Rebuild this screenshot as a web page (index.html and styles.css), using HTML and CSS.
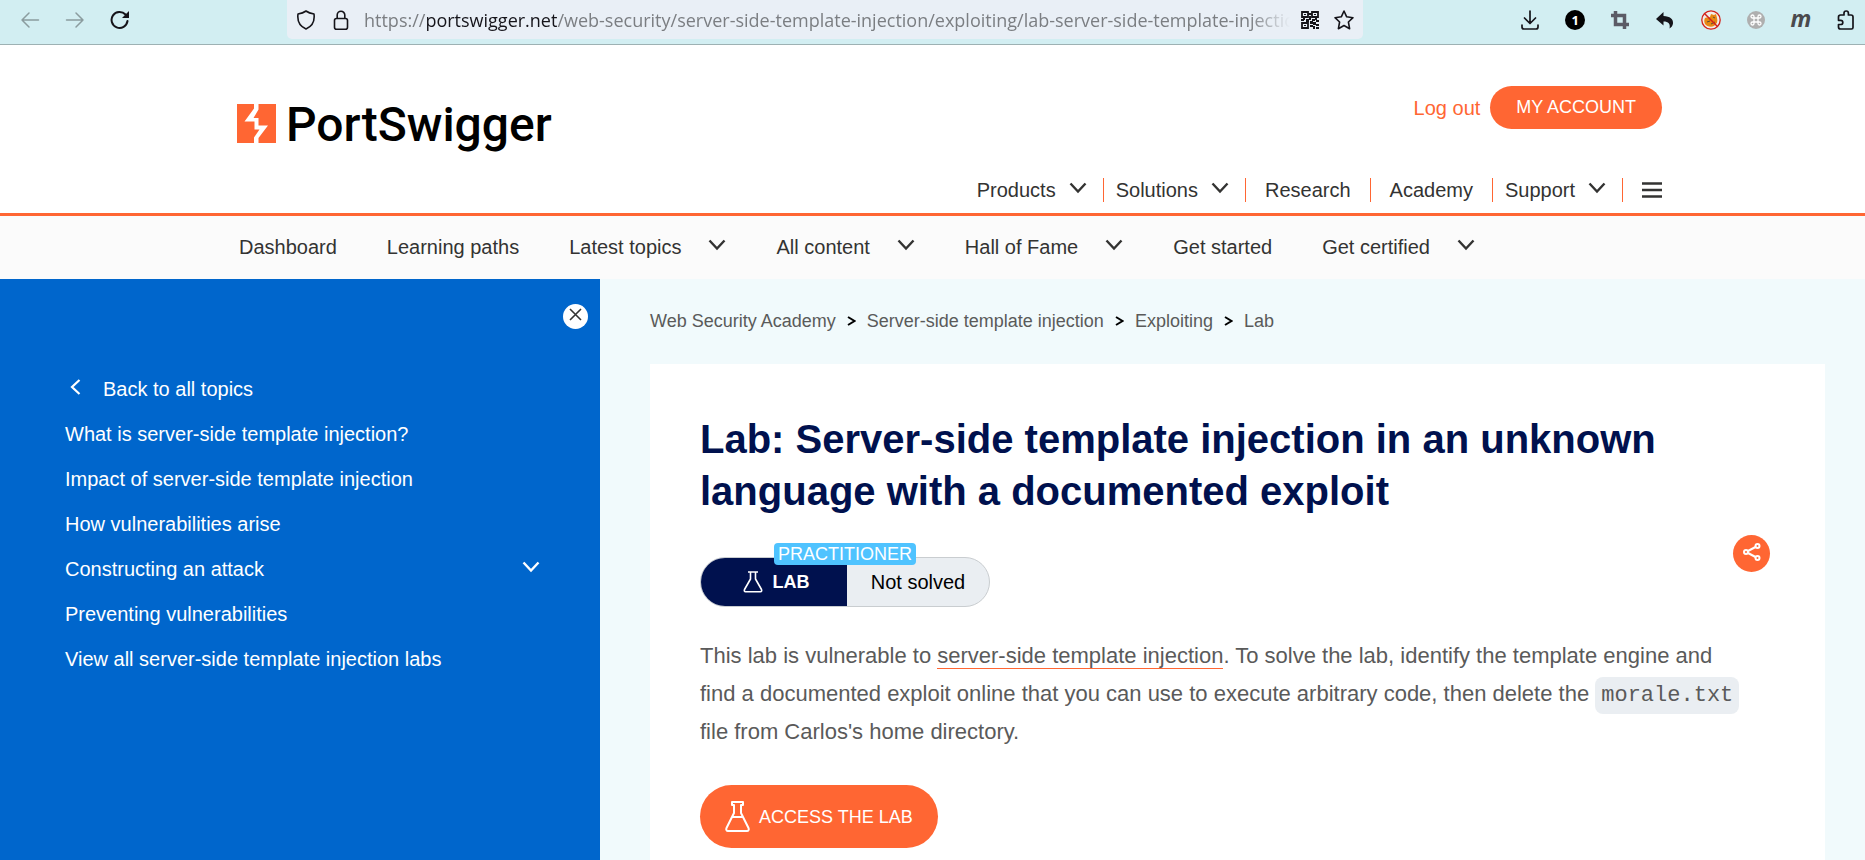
FILE: index.html
```html
<!DOCTYPE html>
<html lang="en">
<head>
<meta charset="utf-8">
<title>Lab: Server-side template injection in an unknown language with a documented exploit</title>
<link rel="stylesheet" href="styles.css">
</head>
<body>
<svg class="defs" aria-hidden="true">
  <symbol id="chevron" viewBox="0 0 18 12"><path d="M1.500 1.500 9 9.500l7.500-8" fill="none" stroke="currentColor" stroke-width="2.400"/></symbol>
  <symbol id="crumb" viewBox="0 0 9 10"><path d="m1 1 6.500 4L1 9" fill="none" stroke="currentColor" stroke-width="2"/></symbol>
</svg>
<div class="toolbar">
  <div class="tool-nav">
    <button class="tool faded" aria-label="Back"><svg width="20" height="20" viewBox="0 0 20 20" fill="none" stroke="currentColor" stroke-width="1.500" stroke-linecap="round" stroke-linejoin="round"><path d="M18.500 10H2M9 3l-7 7 7 7"/></svg></button>
    <button class="tool faded" aria-label="Forward"><svg width="20" height="20" viewBox="0 0 20 20" fill="none" stroke="currentColor" stroke-width="1.500" stroke-linecap="round" stroke-linejoin="round"><path d="M1.500 10H18M11 3l7 7-7 7"/></svg></button>
    <button class="tool" aria-label="Reload"><svg width="20" height="20" viewBox="0 0 20 20"><path d="M17.500 11A8 8 0 1 1 15.500 4.500" fill="none" stroke="currentColor" stroke-width="2" stroke-linecap="round"/><path d="M19 1v7h-7z" fill="currentColor"/></svg></button>
  </div>
  <div class="address">
    <svg width="20" height="20" viewBox="0 0 20 20" fill="none" stroke="currentColor" stroke-width="1.600" stroke-linejoin="round"><path d="M10 1c2.500 1.800 5 2.500 8 3 .8 6-1.500 12-8 15C3.500 16 1.200 10 2 4c3-.5 5.500-1.200 8-3z"/></svg>
    <svg width="20" height="20" viewBox="0 0 20 20" fill="none" stroke="currentColor" stroke-width="1.600"><rect x="3.500" y="8.500" width="13" height="10.700" rx="2"/><path d="M6.200 8.500V5a3.800 3.800 0 0 1 7.600 0v3.500"/></svg>
    <div class="url">https://<b>portswigger.net</b>/web-security/server-side-template-injection/exploiting/lab-server-side-template-injectic</div>
    <svg width="18" height="18" viewBox="0 0 18 18"><g fill="none" stroke="currentColor" stroke-width="1.800"><path d="M1 1h6v5H1zM11 1h6v5h-6zM1 12h6v5H1z"/></g><path d="M3 3h2v1H3zM13 3h2v1h-2zM3 14h2v1H3zM7 2h4v2H7zM8 5h2v4H8zM2 6h2v3H2zM0 8h3v2H0zM5 8h3v3H5zM11 8h3v2h-3zM14 6h2v3h-2zM15 9h3v2h-3zM9 10h3v3H9zM12 11h3v3h-3zM15 13h3v2h-3zM9 14h3v2H9zM12 15h2v3h-2zM15 16h3v2h-3z" fill="currentColor"/></svg>
    <svg width="20" height="20" viewBox="0 0 20 20" fill="none" stroke="currentColor" stroke-width="1.600" stroke-linejoin="round"><path d="m10 1 2.700 5.800 6.300.9-4.600 4.300 1.200 6.700L10 15.500l-5.600 3.200L5.600 12 1 7.700l6.300-.9z"/></svg>
  </div>
  <div class="extensions">
    <button class="tool" aria-label="Downloads"><svg width="20" height="20" viewBox="0 0 20 20" fill="none" stroke="currentColor" stroke-width="1.700" stroke-linecap="round" stroke-linejoin="round"><path d="M10 1v12M4.500 8l5.500 5.500L15.500 8M2 15v2a2 2 0 0 0 2 2h12a2 2 0 0 0 2-2v-2"/></svg></button>
    <button class="tool badge" aria-label="1 notification">1</button>
    <button class="tool gray" aria-label="Screenshot"><svg width="18" height="18" viewBox="0 0 18 18" fill="none" stroke="currentColor" stroke-width="3.500"><path d="M4.500 0v13.500H18M0 4.500h13.500V18"/></svg></button>
    <button class="tool" aria-label="Undo"><svg width="20" height="20" viewBox="0 0 20 20"><path d="M8.500 2v4c6.500.3 10 3 9.500 7.500-.3 2.300-1.500 4-3.500 5C15.500 14 13.500 11.500 8.500 11.500v4L1 9z" fill="currentColor"/></svg></button>
    <button class="tool" aria-label="Blocked"><svg width="20" height="20" viewBox="0 0 20 20"><circle cx="10" cy="10" r="9.200" fill="#f3ece8"/><path d="M4 8c2-1 3 0 5-1l1-3 3 1 2-1 1 4c1 3 0 6-3 8-3 1.500-7 .5-9-2-1-2-1-4 0-6z" fill="#e88712"/><path d="m6 12 3-1M10 14l4-2M12 7l2 1" stroke="#5b4b3a"/><circle cx="10" cy="10" r="9.200" fill="none" stroke="#d3221a" stroke-width="1.300"/><path d="m3.500 3.500 13 13" stroke="#d3221a" stroke-width="1.500"/></svg></button>
    <button class="tool" aria-label="Shortcuts"><svg width="18" height="18" viewBox="0 0 18 18"><circle cx="9" cy="9" r="9" fill="#afafaf"/><path d="M7 7h4v4H7zM7 7H5.500A1.500 1.500 0 1 1 7 5.500zM11 7V5.500A1.500 1.500 0 1 1 12.500 7zM11 11h1.500a1.500 1.500 0 1 1-1.500 1.500zM7 11v1.500A1.500 1.500 0 1 1 5.500 11z" fill="none" stroke="#fff" stroke-width="1.300"/></svg></button>
    <button class="tool mark" aria-label="Markdown">m</button>
    <button class="tool" aria-label="Extensions"><svg width="20" height="20" viewBox="0 0 20 20" fill="none" stroke="currentColor" stroke-width="1.700" stroke-linejoin="round"><path d="M2.500 9V7a2 2 0 0 1 2-2H8V3.200a2.200 2.200 0 0 1 4.400 0V5H15a2 2 0 0 1 2 2v10.500a1.500 1.500 0 0 1-1.500 1.500h-11a2 2 0 0 1-2-2v-2.500h2.200a2.100 2.100 0 0 0 0-4.200H2.500z"/></svg></button>
  </div>
</div>

<header class="site-header">
  <div class="wrap header-grid">
    <a class="logo" href="#" aria-label="PortSwigger">
      <svg width="39" height="39" viewBox="0 0 39 39"><path d="M0 0h39v39H0z" fill="#ff6633"/><path d="M17 0h4.500v5.500L16.500 14H21.500v7.500H31L21.500 34v5H17v-5.500L22.500 25.500H17.500V17.500H7.500L17 4.500z" fill="#fff"/></svg>
      <span>PortSwigger</span>
    </a>
    <div class="account"><a class="logout" href="#">Log out</a><a class="pill" href="#">MY ACCOUNT</a></div>
    <nav class="main-nav">
      <button>Products <svg class="down" width="18" height="12"><use href="#chevron"/></svg></button>
      <button>Solutions <svg class="down" width="18" height="12"><use href="#chevron"/></svg></button>
      <a class="plain" href="#">Research</a>
      <a class="plain" href="#">Academy</a>
      <button>Support <svg class="down" width="18" height="12"><use href="#chevron"/></svg></button>
      <button class="burger" aria-label="Menu"><svg width="20" height="16" viewBox="0 0 20 16"><path d="M0 1.500h20M0 8h20M0 14.500h20" stroke="currentColor" stroke-width="2.500"/></svg></button>
    </nav>
  </div>
</header>

<nav class="sub-nav">
  <div class="wrap sub-row">
    <a href="#">Dashboard</a>
    <a href="#">Learning paths</a>
    <button>Latest topics <svg class="down" width="18" height="12"><use href="#chevron"/></svg></button>
    <button>All content <svg class="down" width="18" height="12"><use href="#chevron"/></svg></button>
    <button>Hall of Fame <svg class="down" width="18" height="12"><use href="#chevron"/></svg></button>
    <a href="#">Get started</a>
    <button>Get certified <svg class="down" width="18" height="12"><use href="#chevron"/></svg></button>
  </div>
</nav>

<div class="page">
  <aside class="sidebar">
    <button class="close" aria-label="Close"><svg width="13" height="13" viewBox="0 0 13 13"><path d="m1 1 11 11M12 1 1 12" stroke="currentColor" stroke-width="1.600"/></svg></button>
    <ul class="topics">
      <li><a class="back" href="#"><svg class="down" width="11" height="16" viewBox="0 0 11 16"><path d="M9.500 1 2 8l7.500 7" fill="none" stroke="currentColor" stroke-width="2.200"/></svg>Back to all topics</a></li>
      <li><a href="#">What is server-side template injection?</a></li>
      <li><a href="#">Impact of server-side template injection</a></li>
      <li><a href="#">How vulnerabilities arise</a></li>
      <li><button>Constructing an attack <svg class="down" width="18" height="12"><use href="#chevron"/></svg></button></li>
      <li><a href="#">Preventing vulnerabilities</a></li>
      <li><a href="#">View all server-side template injection labs</a></li>
    </ul>
  </aside>
  <main class="content">
    <nav class="crumbs" aria-label="Breadcrumb">
      <a href="#">Web Security Academy</a><svg width="9" height="10"><use href="#crumb"/></svg>
      <a href="#">Server-side template injection</a><svg width="9" height="10"><use href="#crumb"/></svg>
      <a href="#">Exploiting</a><svg width="9" height="10"><use href="#crumb"/></svg>
      <a href="#">Lab</a>
    </nav>
    <article class="card">
      <h1>Lab: Server-side template injection in an unknown language with a documented exploit</h1>
      <div class="status-row">
        <div class="status">
          <span class="kind"><svg width="20" height="22" viewBox="0 0 20 22" fill="none" stroke="currentColor" stroke-width="1.600" stroke-linejoin="round"><path d="M5 1h10M7.500 1v7L1.500 18.500c-.5 1.500 0 2.300 1 2.300h15c1 0 1.500-.8 1-2.300L12.500 8V1"/></svg>LAB</span>
          <span class="state">Not solved</span>
          <span class="level">PRACTITIONER</span>
        </div>
        <button class="share" aria-label="Share"><svg width="18" height="18" viewBox="0 0 18 18" fill="none" stroke="currentColor" stroke-width="2"><circle cx="3" cy="9" r="2"/><circle cx="14.500" cy="3" r="2"/><circle cx="14.500" cy="15" r="2"/><path d="m5 8 7.500-4M5 10l7.500 4"/></svg></button>
      </div>
      <p>This lab is vulnerable to <a href="#">server-side template injection</a>. To solve the lab, identify the template engine and find a documented exploit online that you can use to execute arbitrary code, then delete the <code>morale.txt</code> file from Carlos's home directory.</p>
      <a class="access" href="#"><svg width="25" height="31" viewBox="0 0 25 31" fill="none" stroke="currentColor" stroke-width="2" stroke-linejoin="round"><path d="M7 1h11v3h-2v8l7.500 15c.6 1.500 0 3-1.500 3H3c-1.500 0-2.100-1.500-1.500-3L9 12V4H7zM7 16h11"/></svg>ACCESS THE LAB</a>
    </article>
  </main>
</div>
</body>
</html>
```
FILE: styles.css
```css
* { box-sizing: border-box; }
body {
  margin: 0;
  min-height: 100vh;
  display: flex;
  flex-direction: column;
  font: 20px/24px "Liberation Sans", Arial, sans-serif;
  color: #333332;
  background: #fff;
}
a { color: inherit; text-decoration: none; }
button { font: inherit; color: inherit; background: none; border: 0; padding: 0; cursor: pointer; }
svg { display: block; flex: none; }
.defs { position: absolute; width: 0; height: 0; }
.down { margin-bottom: 4px; }

/* browser toolbar */
.toolbar {
  display: grid;
  grid-template-columns: 287px minmax(0, 1fr) 502px;
  height: 45px;
  background: #d2eef2;
  border-bottom: 1px solid #9db1b3;
  color: #15141a;
}
.tool-nav { display: flex; gap: 25px; padding: 0 0 5px 20px; }
.tool { display: flex; align-items: center; justify-content: center; width: 20px; }
.faded { color: #8b9c9f; }
.address {
  display: flex;
  align-items: center;
  gap: 15px;
  height: 39px;
  padding: 0 9px;
  background: #e9eff6;
  border-radius: 0 0 5px 5px;
}
.url {
  flex: 1;
  min-width: 0;
  margin: 0 -4px 0 -2px;
  overflow: hidden;
  white-space: nowrap;
  font: 18px/26px "Open Sans", sans-serif;
  color: #7b7e82;
  mask-image: linear-gradient(to left, transparent, #000 40px);
}
.url b { font-weight: 400; color: #15141a; }
.extensions { display: flex; justify-content: space-between; padding: 0 9px 5px 157px; }
.badge {
  align-self: center;
  height: 20px;
  border-radius: 50%;
  background: #000;
  color: #fff;
  font: 700 13px/20px "Noto Sans", sans-serif;
}
.gray { color: #5b5b66; }
.mark { padding-bottom: 4px; font: italic 700 23px/24px "Open Sans", sans-serif; color: #4a4a4d; }

/* site header */
.wrap { width: 100%; max-width: 1425px; margin: 0 auto; }
.site-header { background: #fff; border-bottom: 3px solid #ff6633; }
.header-grid {
  max-width: 1459px;
  display: grid;
  grid-template-columns: auto 1fr;
  grid-template-rows: 92px 35px;
  padding-top: 41px;
}
.logo {
  grid-row: 1 / 3;
  display: flex;
  align-items: flex-start;
  gap: 10px;
  margin-left: 34px;
  padding-top: 18px;
  color: #000;
}
.logo span { font: 500 48px/42px Roboto, sans-serif; }
.account { display: flex; align-items: flex-start; justify-content: flex-end; gap: 10px; }
.logout { line-height: 44px; color: #ff6633; }
.pill {
  padding: 0 26px;
  border-radius: 22px;
  background: #ff6633;
  color: #fff;
  font-size: 18px;
  line-height: 43px;
}
.main-nav { display: flex; justify-content: flex-end; align-items: flex-start; }
.main-nav > * { display: flex; align-items: center; gap: 13px; padding: 0 16px 0 12px; height: 24px; }
.main-nav > * + * { border-left: 1px solid #ff6633; }
.main-nav .plain { padding: 0 19px; }
.main-nav .burger { padding: 0 0 0 19px; }

/* academy navigation */
.sub-nav { background: #fbfbfb; }
.sub-row { display: flex; gap: 50px; padding: 19px 19px 20px; }
.sub-row button { display: flex; align-items: center; gap: 27px; }

.page { flex: 1; display: grid; grid-template-columns: 600px minmax(0, 1fr); }
.sidebar { display: flex; flex-direction: column; padding: 25px 12px; background: #0066cc; color: #fff; }
.close {
  align-self: flex-end;
  display: flex;
  justify-content: center;
  width: 25px;
  height: 25px;
  padding-top: 4px;
  border-radius: 50%;
  background: #fff;
  color: #333332;
}
.topics { list-style: none; margin: 0; padding: 38px 48px 0 53px; }
.topics li { height: 45px; padding-top: 10px; }
.topics button { display: flex; align-items: center; justify-content: space-between; width: 100%; }
.back { display: flex; align-items: center; gap: 22px; padding-left: 5px; }

.content { padding: 30px 40px 0 50px; background: #f1fafc; display: flex; flex-direction: column; }
.crumbs { display: flex; align-items: center; gap: 11px; font-size: 18px; color: #5a5a5a; }
.crumbs svg { color: #000; }
.card { flex: 1; margin-top: 31px; padding: 49px 50px 12px; background: #fff; }
h1 { margin: 0; font-size: 40px; line-height: 52px; color: #00114e; }
.status-row { display: flex; justify-content: space-between; margin-top: 18px; }
.status {
  position: relative;
  display: flex;
  margin-top: 22px;
  width: 290px;
  height: 50px;
  border: 1px solid #c9cdd0;
  border-radius: 25px;
  background: #eaeef2;
  color: #000;
}
.kind, .state { flex: 1; display: flex; align-items: center; justify-content: center; }
.kind { gap: 10px; padding-left: 4px; border-radius: 24px 0 0 24px; background: #00114e; color: #fff; font-size: 18px; font-weight: 700; }
.level {
  position: absolute;
  left: 50%;
  top: -15px;
  transform: translateX(-50%);
  padding: 0 4px;
  border-radius: 4px;
  background: #4fc3ff;
  color: #fff;
  font-size: 18px;
  line-height: 22px;
}
.share {
  display: flex;
  justify-content: center;
  width: 37px;
  height: 37px;
  padding-top: 8px;
  margin-right: 5px;
  border-radius: 50%;
  background: #ff6633;
  color: #fff;
}
p { margin: 30px 0 0; padding-right: 24px; font-size: 22px; line-height: 38px; color: #5a5a5a; }
p a { border-bottom: 1px solid #ff6633; }
code { padding: 6px; border-radius: 8px; background: #eaeef2; font: 22px/26px "Liberation Mono", monospace; }
.access {
  display: inline-flex;
  align-items: center;
  gap: 9px;
  height: 63px;
  margin-top: 34px;
  padding: 0 25px;
  border-radius: 32px;
  background: #ff6633;
  color: #fff;
  font-size: 18px;
}
```
